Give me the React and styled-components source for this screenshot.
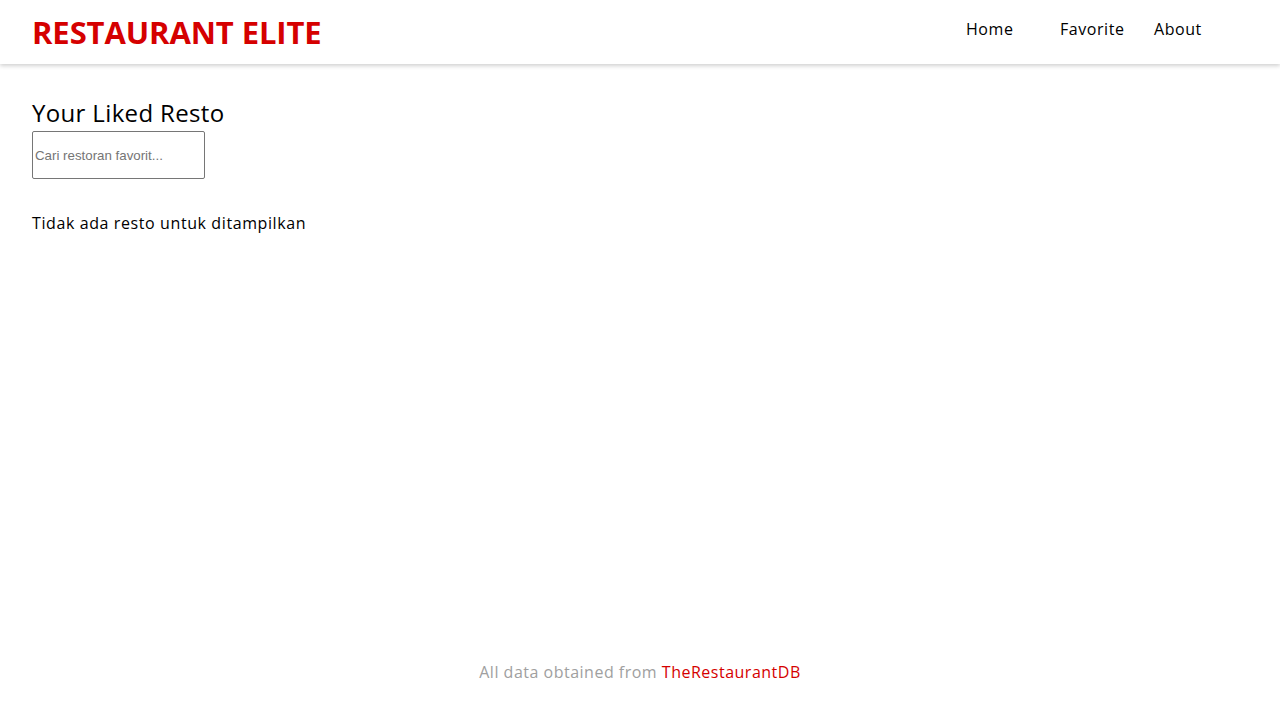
import React from 'react';
import styled, { createGlobalStyle } from 'styled-components';

const GlobalStyle = createGlobalStyle`
  * {
    box-sizing: border-box;
  }

  html, body {
    margin: 0;
    padding: 0;
    background: #fff;
  }

  body {
    font-family: 'Open Sans', 'DejaVu Sans', sans-serif;
    color: #000;
  }
`;

const Page = styled.div`
  display: flex;
  flex-direction: column;
  min-height: 720px;
`;

const Header = styled.header`
  display: flex;
  align-items: center;
  justify-content: space-between;
  height: 64px;
  padding: 0 32px;
  background: #fff;
  box-shadow: 0 2px 4px rgba(0, 0, 0, 0.18);
`;

const Brand = styled.h1`
  margin: 0;
  font-size: 31px;
  font-weight: 700;
  color: #d50000;
  letter-spacing: -0.1px;
  line-height: 1;
`;

const NavList = styled.ul`
  display: flex;
  margin: 0;
  padding: 0;
  list-style: none;
`;

const NavItem = styled.li`
  min-width: 94px;
  padding-bottom: 7px;
`;

const NavLink = styled.a`
  font-size: 16px;
  letter-spacing: 0.55px;
  color: #000;
  text-decoration: none;
`;

const Main = styled.main`
  flex: 1;
  padding: 34px 32px 0;
`;

const Title = styled.h2`
  margin: 0 0 3px;
  font-size: 24px;
  font-weight: 400;
  line-height: 30px;
  letter-spacing: 0.35px;
`;

const SearchInput = styled.input`
  display: block;
  width: 173px;
  height: 48px;
  margin: 0;
  padding: 0 2px;
  border: 1px solid #767676;
  border-radius: 2px;
  font-family: 'Liberation Sans', Arial, sans-serif;
  font-size: 13.3px;
  color: #000;

  &::placeholder {
    color: #757575;
  }
`;

const Empty = styled.p`
  margin: 34px 0 0;
  font-size: 16px;
  line-height: 20px;
  letter-spacing: 0.6px;
`;

const Footer = styled.footer`
  padding: 0 0 37px;
  text-align: center;
  font-size: 16px;
  letter-spacing: 0.5px;
  color: #a0a0a0;
`;

const SourceLink = styled.a`
  color: #d50000;
  text-decoration: none;
`;

const navLinks = ['Home', 'Favorite', 'About'];

function App() {
  return (
    <Page>
      <GlobalStyle />
      <Header>
        <Brand>RESTAURANT ELITE</Brand>
        <nav>
          <NavList>
            {navLinks.map((label) => (
              <NavItem key={label}>
                <NavLink href="#">{label}</NavLink>
              </NavItem>
            ))}
          </NavList>
        </nav>
      </Header>
      <Main>
        <Title>Your Liked Resto</Title>
        <SearchInput placeholder="Cari restoran favorit..." />
        <Empty>Tidak ada resto untuk ditampilkan</Empty>
      </Main>
      <Footer>
        All data obtained from <SourceLink href="#">TheRestaurantDB</SourceLink>
      </Footer>
    </Page>
  );
}

export default App;
